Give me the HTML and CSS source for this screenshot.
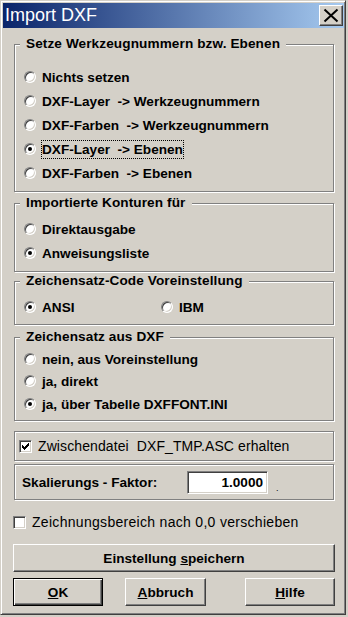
FILE: index.html
```html
<!DOCTYPE html>
<html lang="de">
<head>
<meta charset="utf-8">
<title>Import DXF</title>
<link rel="stylesheet" href="styles.css">
</head>
<body>
<div class="window">
  <div class="titlebar">
    <span class="title">Import DXF</span>
    <span class="close"><svg width="22" height="19" viewBox="0 0 22 19"><path d="M4.5 3.5 L17.5 15.5 M17.5 3.5 L4.5 15.5" stroke="#000" stroke-width="2" fill="none"/></svg></span>
  </div>
  <div class="content">
    <div class="group g1">
      <div class="legend"><span>Setze Werkzeugnummern bzw. Ebenen</span></div>
      <div class="opts">
        <div class="opt"><span class="radio"></span><span class="text">Nichts setzen</span></div>
        <div class="opt"><span class="radio"></span><span class="text">DXF-Layer&nbsp; -&gt; Werkzeugnummern</span></div>
        <div class="opt"><span class="radio"></span><span class="text">DXF-Farben&nbsp; -&gt; Werkzeugnummern</span></div>
        <div class="opt"><span class="radio on"></span><span class="text focus">DXF-Layer&nbsp; -&gt; Ebenen</span></div>
        <div class="opt"><span class="radio"></span><span class="text">DXF-Farben&nbsp; -&gt; Ebenen</span></div>
      </div>
    </div>
    <div class="group g2">
      <div class="legend"><span>Importierte Konturen für</span></div>
      <div class="opts">
        <div class="opt"><span class="radio"></span><span class="text">Direktausgabe</span></div>
        <div class="opt"><span class="radio on"></span><span class="text">Anweisungsliste</span></div>
      </div>
    </div>
    <div class="group g3">
      <div class="legend"><span>Zeichensatz-Code Voreinstellung</span></div>
      <div class="opts">
        <div class="opt first"><span class="radio on"></span><span class="text">ANSI</span></div>
        <div class="opt"><span class="radio"></span><span class="text">IBM</span></div>
      </div>
    </div>
    <div class="group g4">
      <div class="legend"><span>Zeichensatz aus DXF</span></div>
      <div class="opts">
        <div class="opt"><span class="radio"></span><span class="text">nein, aus Voreinstellung</span></div>
        <div class="opt"><span class="radio"></span><span class="text">ja, direkt</span></div>
        <div class="opt"><span class="radio on"></span><span class="text">ja, über Tabelle DXFFONT.INI</span></div>
      </div>
    </div>
    <div class="group box5">
      <span class="check"><svg width="7" height="7" viewBox="0 0 7 7" shape-rendering="crispEdges"><path d="M0 2h1v3h-1z M1 3h1v3h-1z M2 4h1v3h-1z M3 3h1v3h-1z M4 2h1v3h-1z M5 1h1v3h-1z M6 0h1v3h-1z" fill="#000"/></svg></span>
      <span class="cktext ck1">Zwischendatei&nbsp; DXF_TMP.ASC erhalten</span>
    </div>
    <div class="group box6">
      <span class="flabel">Skalierungs - Faktor:</span>
      <input class="num" type="text" value="1.0000" readonly>
      <span class="dot">.</span>
    </div>
    <div class="ckrow">
      <span class="check"></span>
      <span class="cktext ck2">Zeichnungsbereich nach 0,0 verschieben</span>
    </div>
    <div class="btn wide"><span>Einstellung <u>s</u>peichern</span></div>
    <div class="btnrow">
      <div class="btn ok"><span><u>O</u>K</span></div>
      <div class="btn abbruch"><span><u>A</u>bbruch</span></div>
      <div class="btn hilfe"><span><u>H</u>ilfe</span></div>
    </div>
  </div>
</div>
</body>
</html>
```
FILE: styles.css
```css
html, body {
  margin: 0;
  padding: 0;
}
body {
  width: 348px;
  height: 617px;
  overflow: hidden;
  background: #d4d0c8;
  font-family: "Liberation Sans", Arial, sans-serif;
  color: #000;
}
.window {
  box-sizing: border-box;
  width: 346px;
  height: 615px;
  border: 1px solid;
  border-color: #d4d0c8 #404040 #404040 #d4d0c8;
  box-shadow: inset 1px 1px 0 #fff, inset -1px -1px 0 #808080;
  padding: 2px 1px 2px 2px;
  background: #d4d0c8;
  display: flex;
  flex-direction: column;
}
.titlebar {
  height: 25px;
  flex: 0 0 25px;
  background: linear-gradient(to right, #0a246a, #a6caf0);
  display: flex;
  align-items: center;
  justify-content: space-between;
  padding: 0 1px 0 2px;
}
.title {
  color: #fff;
  font-size: 18px;
  line-height: 25px;
}
.close {
  box-sizing: border-box;
  width: 24px;
  height: 21px;
  border: 1px solid;
  border-color: #fff #404040 #404040 #fff;
  box-shadow: inset -1px -1px 0 #808080;
  background: #d4d0c8;
  display: block;
}
.close svg { display: block; }
.content {
  display: flex;
  flex-direction: column;
  padding-left: 11px;
}
.group {
  box-sizing: border-box;
  width: 320px;
  border: 1px solid #808080;
  box-shadow: inset 1px 1px 0 #fff, 1px 1px 0 #fff;
}
.legend {
  height: 16px;
  margin-top: -9px;
  line-height: 16px;
  padding-left: 5px;
  font-size: 13.6px;
  font-weight: bold;
  letter-spacing: 0.1px;
}
.legend span {
  background: #d4d0c8;
  padding: 0 6px;
}
.opts {
  display: flex;
  flex-direction: column;
}
.opt {
  height: 24px;
  display: flex;
  align-items: center;
}
.radio {
  position: relative;
  box-sizing: border-box;
  width: 12px;
  height: 12px;
  flex: 0 0 12px;
  margin: 0 5px 0 9px;
  border-radius: 50%;
  border: 1px solid;
  border-color: #808080 #fff #fff #808080;
  box-shadow: inset 1px 1px 0 #404040, inset -1px -1px 0 #d4d0c8;
  background: #fff;
}
.radio.on::after {
  content: "";
  position: absolute;
  left: 3px;
  top: 3px;
  width: 4px;
  height: 4px;
  border-radius: 50%;
  background: #000;
}
.text {
  font-size: 13.6px;
  font-weight: bold;
  line-height: 17px;
  border: 1px dotted transparent;
  white-space: nowrap;
}
.text.focus {
  border-color: #000;
}
.g1 { height: 148px; margin-top: 16px; }
.g1 .opts { padding-top: 13px; }
.g2 { height: 69px; margin-top: 11px; }
.g2 .opts { padding-top: 6px; }
.g3 { height: 44px; margin-top: 9px; }
.g3 .opts { padding-top: 6px; flex-direction: row; }
.g3 .opt.first { flex: 0 0 137px; }
.g4 { height: 84px; margin-top: 12px; }
.g4 .opts { padding-top: 3px; }
.g4 .opt { height: 22px; }
.g4 .opt:last-child { margin-top: 1px; }
.box5 {
  height: 30px;
  margin-top: 10px;
  display: flex;
  align-items: center;
  padding-left: 4px;
}
.check {
  box-sizing: border-box;
  width: 13px;
  height: 13px;
  flex: 0 0 13px;
  border: 1px solid;
  border-color: #808080 #fff #fff #808080;
  box-shadow: inset 1px 1px 0 #404040, inset -1px -1px 0 #d4d0c8;
  background: #fff;
  margin-right: 6px;
}
.check svg {
  display: block;
  margin: 2px 0 0 2px;
}
.cktext {
  font-size: 14px;
  line-height: 17px;
  white-space: nowrap;
}
.ck1 { letter-spacing: 0.1px; }
.ck2 { letter-spacing: 0.3px; }
.box6 {
  height: 36px;
  margin-top: 3px;
  display: flex;
  align-items: center;
  padding-left: 7px;
}
.flabel {
  flex: 0 0 165px;
  font-size: 13.6px;
  font-weight: bold;
}
.num {
  box-sizing: border-box;
  width: 81px;
  height: 23px;
  margin: 0;
  border: 1px solid;
  border-color: #808080 #fff #fff #808080;
  box-shadow: inset 1px 1px 0 #404040, inset -1px -1px 0 #d4d0c8;
  background: #fff;
  padding: 0 4px 0 0;
  text-align: right;
  font-family: "Liberation Sans", Arial, sans-serif;
  font-size: 13.6px;
  font-weight: bold;
  color: #000;
  outline: none;
}
.dot {
  font-size: 9px;
  line-height: 9px;
  margin: 12px 0 0 8px;
}
.ckrow {
  height: 19px;
  margin-top: 13px;
  margin-left: -1px;
  display: flex;
  align-items: center;
}
.btn {
  box-sizing: border-box;
  height: 28px;
  border: 1px solid;
  border-color: #fff #404040 #404040 #fff;
  box-shadow: inset -1px -1px 0 #808080;
  background: #d4d0c8;
  display: flex;
  align-items: center;
  justify-content: center;
  font-size: 13.6px;
  font-weight: bold;
  white-space: nowrap;
}
.btn.wide {
  width: 322px;
  margin: 12px 0 0 -1px;
}
.btnrow {
  display: flex;
  margin: 6px 0 0 -1px;
}
.btn.ok {
  width: 90px;
  border-color: #000;
  box-shadow: inset 1px 1px 0 #fff, inset -1px -1px 0 #404040, inset -2px -2px 0 #808080;
}
.btn.abbruch {
  width: 81px;
  margin-left: 22px;
}
.btn.hilfe {
  width: 90px;
  margin-left: 39px;
}
```
